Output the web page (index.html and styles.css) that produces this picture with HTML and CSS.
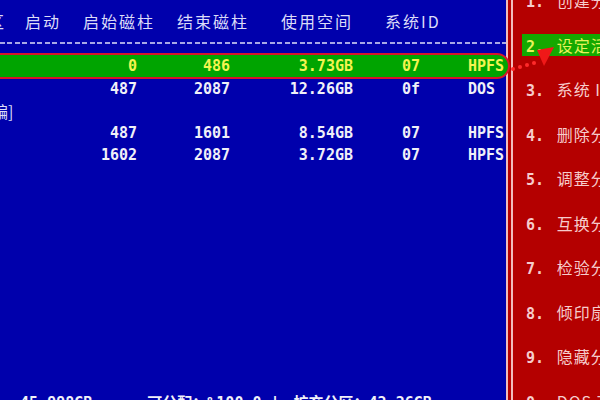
FILE: index.html
```html
<!DOCTYPE html>
<html lang="zh-CN">
<head>
    <meta charset="UTF-8">
    <meta name="viewport" content="width=device-width, initial-scale=1.0">
    <title>分区工具</title>
    <link rel="stylesheet" href="styles.css">
</head>
<body>
    <div class="screen">
        <div class="table-panel">
            <div class="head">
                <span>分区</span>
                <span>启动</span>
                <span>启始磁柱</span>
                <span>结束磁柱</span>
                <span>使用空间</span>
                <span>系统ID</span>
            </div>
            <div class="rule"></div>

            <div class="row selected">
                <span class="num">0</span>
                <span class="num">486</span>
                <span class="num">3.73GB</span>
                <span class="id">07</span>
                <span>HPFS</span>
            </div>
            <div class="row second">
                <span class="num">487</span>
                <span class="num">2087</span>
                <span class="num">12.26GB</span>
                <span class="id">0f</span>
                <span>DOS</span>
            </div>
            <div class="row note"><span>编]</span></div>
            <div class="row">
                <span class="num">487</span>
                <span class="num">1601</span>
                <span class="num">8.54GB</span>
                <span class="id">07</span>
                <span>HPFS</span>
            </div>
            <div class="row">
                <span class="num">1602</span>
                <span class="num">2087</span>
                <span class="num">3.72GB</span>
                <span class="id">07</span>
                <span>HPFS</span>
            </div>

            <div class="summary">
                <span class="total">: 45.998GB</span>
                <span class="free">可分配：%100.0 |</span>
                <span class="ext">扩充分区：42.26GB</span>
            </div>
        </div>

        <div class="menu">
            <div class="menu-list">
                <div class="menu-item"><span class="label"><b>1.</b> 创建分区</span></div>
                <div class="menu-item active"><span class="label"><b>2.</b> 设定活动分区</span></div>
                <div class="menu-item"><span class="label"><b>3.</b> 系统 I</span></div>
                <div class="menu-item"><span class="label"><b>4.</b> 删除分区</span></div>
                <div class="menu-item"><span class="label"><b>5.</b> 调整分区</span></div>
                <div class="menu-item"><span class="label"><b>6.</b> 互换分区</span></div>
                <div class="menu-item"><span class="label"><b>7.</b> 检验分区</span></div>
                <div class="menu-item"><span class="label"><b>8.</b> 倾印扇区</span></div>
                <div class="menu-item"><span class="label"><b>9.</b> 隐藏分区</span></div>
                <div class="menu-item"><span class="label"><b>0.</b> DOS 7</span></div>
            </div>
        </div>

        <!-- red dotted pointer from the selected row to the menu -->
        <svg class="pointer" width="60" height="34" viewBox="0 0 60 34">
            <circle cx="9" cy="28" r="2" fill="#ff2a2a"/>
            <circle cx="16" cy="26" r="2" fill="#ff2a2a"/>
            <circle cx="23" cy="24" r="2" fill="#ff2a2a"/>
            <circle cx="30" cy="22" r="2" fill="#ff2a2a"/>
            <polygon points="33,9 50,6 40,25" fill="#f01818"/>
        </svg>
    </div>
</body>
</html>
```

FILE: styles.css
```css
html, body {
    margin: 0;
    height: 100%;
    overflow: hidden;
}
body {
    background-color: #0000ac;
    font-family: "DejaVu Sans Mono", "Noto Sans CJK SC", monospace;
}
.screen {
    position: relative;
    display: flex;
    width: 600px;
    height: 400px;
}
.table-panel {
    width: 506px;
    flex: none;
    display: flex;
    flex-direction: column;
    padding-top: 10px;
    box-sizing: border-box;
    background-color: #0000ac;
}
.head {
    display: grid;
    grid-template-columns: 55px 58px 94px 104px 104px auto;
    margin-left: -30px;
    height: 22px;
    line-height: 22px;
    font-family: "Noto Sans CJK SC", sans-serif;
    font-size: 16px;
    letter-spacing: 2px;
    color: #dcdcf8;
    white-space: nowrap;
}
.rule {
    height: 2px;
    margin-top: 10px;
    background: repeating-linear-gradient(90deg, #a8a8e6 0 5px, transparent 5px 7.5px);
}
.row {
    display: grid;
    grid-template-columns: 137px 93px 123px 115px 1fr;
    height: 22px;
    line-height: 22px;
    font-size: 15px;
    font-weight: bold;
    color: #f0f0f8;
    white-space: nowrap;
}
.row .num {
    text-align: right;
}
.row .id {
    padding-left: 49px;
}
.row.selected {
    position: relative;
    z-index: 1;
    box-sizing: border-box;
    width: 518px;
    height: 26px;
    margin-top: 9px;
    margin-left: -8px;
    padding-left: 6px;
    border: 2px solid #d8142c;
    border-radius: 0 13px 13px 0;
    background-color: #00a400;
    color: #f4f450;
}
.row.second {
    margin-top: -1px;
}
.row.note {
    display: block;
    margin-left: -8px;
    font-family: "Noto Sans CJK SC", sans-serif;
    font-weight: normal;
    font-size: 16px;
    color: #dcdcf8;
}
.summary {
    display: flex;
    margin-top: auto;
    margin-bottom: -14px;
    height: 22px;
    line-height: 22px;
    padding-left: 2px;
    font-size: 15px;
    font-weight: bold;
    color: #f0f0f8;
    white-space: nowrap;
}
.summary .free {
    margin-left: 55px;
}
.summary .ext {
    margin-left: 14px;
}
.menu {
    flex: 1;
    overflow: hidden;
    border-left: 2px solid #f2bcbc;
    box-shadow: inset 3px 0 #b40000, inset 5px 0 #f2bcbc;
    background-color: #b40000;
}
.menu-list {
    margin-top: -22px;
}
.menu-item {
    display: flex;
    align-items: center;
    height: 44.5px;
    white-space: nowrap;
}
.menu-item .label {
    flex: 1;
    padding-left: 18px;
    height: 22px;
    line-height: 22px;
    font-family: "Noto Sans CJK SC", sans-serif;
    font-size: 16px;
    letter-spacing: 1px;
    color: #f6cccc;
}
.menu-item b {
    font-family: "DejaVu Sans Mono", monospace;
    font-size: 15px;
    letter-spacing: 0;
    margin-right: 8px;
}
.menu-item.active .label {
    margin-left: 14px;
    padding-left: 4px;
    background-color: #14a800;
    color: #e6f25a;
}
.pointer {
    position: absolute;
    left: 504px;
    top: 41px;
    z-index: 2;
}
```
